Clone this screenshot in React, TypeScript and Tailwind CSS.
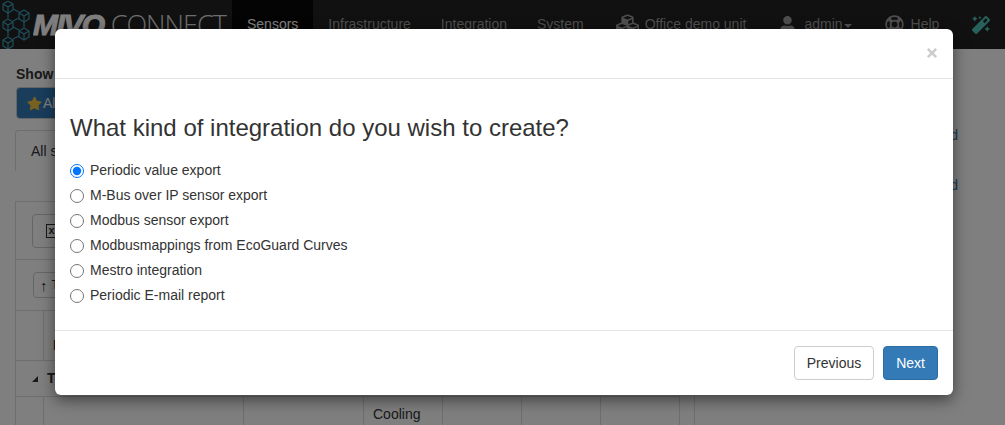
import { FaCubes, FaUser, FaRegLifeRing, FaMagic, FaStar, FaTimes } from 'react-icons/fa';

const options = [
  'Periodic value export',
  'M-Bus over IP sensor export',
  'Modbus sensor export',
  'Modbusmappings from EcoGuard Curves',
  'Mestro integration',
  'Periodic E-mail report',
];

const cols = ['w-[200px]', 'w-[120px]', 'w-[79px]', 'w-[79px]', 'w-[79px]', 'w-[79px]'];

const Logo = () => (
  <svg width="32" height="48" viewBox="0 0 32 48" fill="none" stroke="#3f9cb8" strokeWidth="1.2" className="shrink-0">
    {[
      [8, 5],
      [24, 14],
      [8, 23],
      [24, 32],
      [8, 41],
    ].map(([x, y]) => (
      <g key={`${x}-${y}`}>
        <path d={`M${x} ${y - 5}l5 3v6l-5 3l-5-3v-6z`} />
        <path d={`M${x - 5} ${y - 2}l5 3l5-3M${x} ${y + 1}v6`} />
      </g>
    ))}
    <path d="M13 8l6 3M13 20l6-3M13 26l6 3M13 38l6-3M8 11v6M8 29v6M24 20v6" />
  </svg>
);

const NavItem = ({ label, active }: { label: string; active?: boolean }) => (
  <div className={`flex h-full items-center px-[15px] ${active ? 'bg-[#080808] text-white' : 'text-[#9d9d9d]'}`}>
    {label}
  </div>
);

const App = () => {
  return (
    <div className="relative h-[425px] w-[1005px] overflow-hidden bg-white text-[14px] text-[#333] font-['Liberation_Sans',Arial,sans-serif]">
      {/* Page behind the dialog */}
      <header className="flex h-[49px] items-center bg-[#222] text-[#9d9d9d]">
        <Logo />
        <div className="ml-px flex w-[199px] items-baseline overflow-hidden whitespace-nowrap">
          <span className="text-[30px] font-bold italic tracking-[-1.5px] text-white [-webkit-text-stroke:1px_#ffffff]">MIVO</span>
          <span className="ml-[7px] text-[27px] tracking-[-1px] text-[#ddd] font-['Open_Sans',sans-serif] font-light">CONNECT</span>
        </div>
        <NavItem label="Sensors" active />
        <NavItem label="Infrastructure" />
        <NavItem label="Integration" />
        <NavItem label="System" />
        <div className="ml-[17px] flex items-center gap-[6px]">
          <FaCubes className="h-[23px] w-[23px]" />
          <span>Office demo unit</span>
        </div>
        <div className="ml-[34px] flex items-center gap-[9px]">
          <FaUser className="h-[17px] w-[15px]" />
          <span className="flex items-center gap-[1px]">
            admin
            <span className="mt-[2px] h-0 w-0 border-x-4 border-t-4 border-x-transparent border-t-[#9d9d9d]" />
          </span>
        </div>
        <div className="ml-[33px] flex items-center gap-[7px]">
          <FaRegLifeRing className="h-[19px] w-[19px]" />
          <span>Help</span>
        </div>
        <FaMagic className="ml-[33px] h-[18px] w-[18px] text-[#4fc3b8]" />
      </header>

      <main className="flex">
        <div className="w-[695px] shrink-0 border-r border-[#ddd] pl-[15px]">
          <div className="mt-[15px] pl-px font-bold leading-[20px]">Show</div>
          <button className="ml-px mt-[3px] flex h-[32px] items-center gap-[1px] rounded border border-[#ccc] bg-[#337ab7] px-[10px] text-white">
            <FaStar className="h-[15px] w-[15px] text-[#f0c040]" />
            All sensors
          </button>
          <div className="mt-[11px] h-[41px] w-[200px] rounded-t border border-b-0 border-[#ddd] pl-[15px] pt-[10px]">
            All sensors
          </div>
          <div className="mt-[30px] w-[665px] border-l border-t border-[#ddd]">
            <div className="flex h-[58px] items-center border-b border-[#ddd] pl-[16px]">
              <div className="flex h-[34px] w-[120px] items-center rounded border border-[#ccc] pl-[13px]">
                <span className="flex h-[14px] w-[11px] items-center justify-center border border-[#333] text-[11px] font-bold leading-none">x</span>
              </div>
            </div>
            <div className="flex h-[51px] items-center border-b border-[#ddd] pl-[17px]">
              <div className="flex h-[26px] w-[80px] items-center gap-[4px] rounded border border-[#ccc] pl-[6px] text-[12px]">
                <span className="text-[15px] font-bold leading-none">↑</span>
                <span>Top</span>
              </div>
            </div>
            <div className="flex h-[50px] border-b border-[#ddd]">
              <div className="w-[28px] border-r border-[#ddd]" />
              <div className="pl-[9px] pt-[24px] font-bold">Name</div>
            </div>
            <div className="flex h-[36px] items-center border-b border-[#ddd] pl-[16px] font-bold">
              <span className="mr-[9px] h-0 w-0 border-b-[6px] border-l-[6px] border-b-[#333] border-l-transparent" />
              Total
            </div>
            <div className="flex h-[40px]">
              <div className="w-[28px] shrink-0 border-r border-[#ddd]" />
              {cols.map((w, i) => (
                <div key={i} className={`${w} shrink-0 border-r border-[#ddd] ${i === 2 ? 'pl-[9px] pt-[9px] leading-[16px]' : ''}`}>
                  {i === 2 ? 'Cooling' : null}
                </div>
              ))}
            </div>
          </div>
        </div>
        <div className="flex-1 pr-[47px] text-right text-[#337ab7]">
          <div className="mt-[76px] leading-[20px]">Add</div>
          <div className="mt-[30px] leading-[20px]">Add</div>
        </div>
      </main>

      {/* Backdrop and dialog */}
      <div className="absolute inset-0 bg-black/50" />
      <div className="absolute left-[55px] top-[29px] w-[898px] rounded-[6px] bg-white shadow-[0_5px_15px_rgba(0,0,0,0.5)]">
        <div className="flex h-[50px] justify-end border-b border-[#e5e5e5] pr-[14px] pt-[17px]">
          <FaTimes className="h-[14px] w-[14px] text-black/20" />
        </div>
        <div className="px-[15px] pb-[22px] pt-[36px]">
          <h3 className="mb-[17px] text-[24px] leading-[26.4px]">What kind of integration do you wish to create?</h3>
          {options.map((label, i) => (
            <label key={label} className="flex h-[25px] items-center">
              <input type="radio" name="kind" defaultChecked={i === 0} className="m-0 h-[14px] w-[14px] shrink-0" />
              <span className="ml-[6px]">{label}</span>
            </label>
          ))}
        </div>
        <div className="flex justify-end gap-[9px] border-t border-[#e5e5e5] p-[15px]">
          <button className="h-[34px] rounded border border-[#ccc] bg-white px-[12px]">Previous</button>
          <button className="h-[34px] rounded border border-[#2e6da4] bg-[#337ab7] px-[12px] text-white">Next</button>
        </div>
      </div>
    </div>
  );
};

export default App;
